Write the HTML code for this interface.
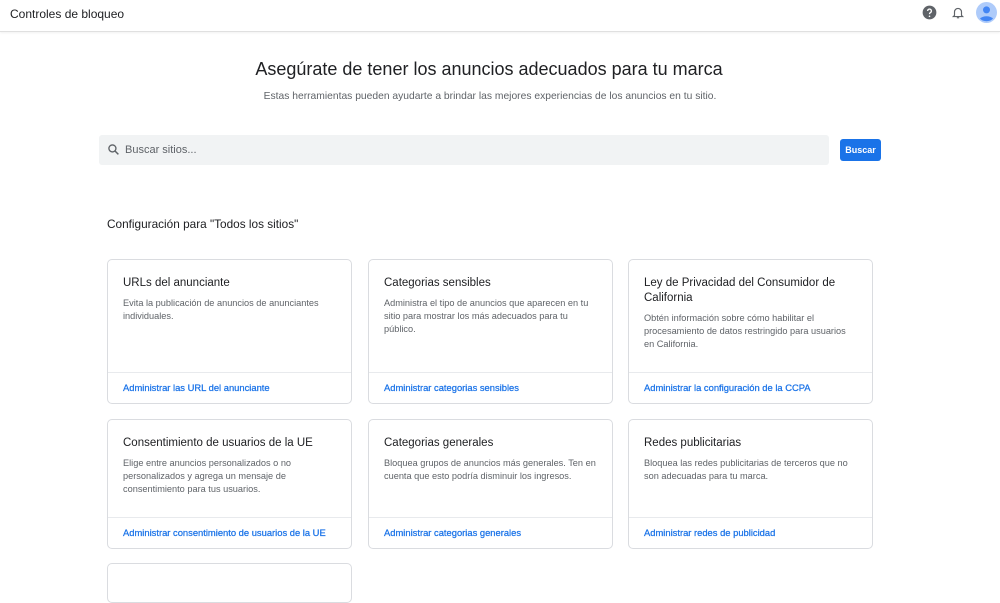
<!DOCTYPE html>
<html><head><meta charset="utf-8"><style>
*{box-sizing:border-box;margin:0;padding:0}
body{width:1000px;height:566px;overflow:hidden;background:#fff;font-family:"Liberation Sans",sans-serif;color:#202124;position:relative}
.hdr{position:absolute;left:0;top:0;width:1000px;height:32px;border-bottom:1px solid #e0e0e0;box-shadow:0 1px 2px rgba(0,0,0,.06)}
.hdr .t{position:absolute;left:10px;top:7px;font-size:12px;color:#202124}
h1{position:absolute;top:59px;left:-11px;width:1000px;text-align:center;font-weight:400;font-size:18px;color:#202124}
.sub{position:absolute;top:91px;width:980px;text-align:center;font-size:10.3px;color:#5f6368}
.search{position:absolute;left:99px;top:135px;width:730px;height:30px;background:#f1f3f4;border-radius:3px}
.search span{position:absolute;left:26px;top:9px;font-size:11px;color:#5f6368}
.btn{position:absolute;left:840px;top:139px;width:41px;height:22px;background:#1a73e8;border-radius:3px;color:#fff;font-size:9px;font-weight:bold;text-align:center;line-height:22px}
.sec{position:absolute;left:107px;top:217px;font-size:11.8px;color:#202124}
.card{position:absolute;width:245px;border:1px solid #dadce0;border-radius:5px;background:#fff}
.card h3{position:absolute;left:15px;top:16px;font-weight:400;font-size:11.5px;line-height:15px;color:#202124;width:225px}
.card p{position:absolute;left:15px;font-size:9.2px;line-height:13px;color:#5f6368;width:213px}
.card .f{position:absolute;left:0;right:0;border-top:1px solid #e8eaed}
.card a{position:absolute;left:15px;font-size:9.4px;color:#1a73e8;text-decoration:none;-webkit-text-stroke:0.25px #1a73e8}
</style></head><body>
<div class="hdr"><div class="t">Controles de bloqueo</div>
<svg style="position:absolute;left:922px;top:5px" width="15" height="15" viewBox="0 0 24 24"><circle cx="12" cy="12" r="11" fill="#5f6368"/><path d="M9 9.5a3 3 0 1 1 4.5 2.6c-1 .6-1.5 1.1-1.5 2.4" stroke="#fff" stroke-width="2.2" fill="none"/><circle cx="12" cy="18" r="1.3" fill="#fff"/></svg>
<svg style="position:absolute;left:951px;top:5px" width="14" height="15" viewBox="0 0 24 24"><path d="M6 17V11a6 6 0 0 1 12 0v6l2 2H4z" fill="none" stroke="#5f6368" stroke-width="2"/><path d="M10 21h4" stroke="#5f6368" stroke-width="2"/></svg>
<svg style="position:absolute;left:976px;top:2px" width="21" height="21" viewBox="0 0 24 24"><circle cx="12" cy="12" r="12" fill="#aecbfa"/><circle cx="12" cy="9" r="4" fill="#4285f4"/><path d="M4.5 19a9 6 0 0 1 15 0A11 11 0 0 1 4.5 19z" fill="#4285f4"/></svg>
</div>
<h1>Asegúrate de tener los anuncios adecuados para tu marca</h1>
<div class="sub">Estas herramientas pueden ayudarte a brindar las mejores experiencias de los anuncios en tu sitio.</div>
<div class="search"><svg style="position:absolute;left:8px;top:8px" width="13" height="13" viewBox="0 0 24 24"><circle cx="10" cy="10" r="6.5" fill="none" stroke="#5f6368" stroke-width="2.5"/><path d="M15 15l6 6" stroke="#5f6368" stroke-width="2.8"/></svg><span>Buscar sitios...</span></div>
<div class="btn">Buscar</div>
<div class="sec">Configuración para "Todos los sitios"</div>

<div class="card" style="left:107px;top:259px;height:145px"><h3>URLs del anunciante</h3><p style="top:37px">Evita la publicación de anuncios de anunciantes individuales.</p><div class="f" style="top:112px"></div><a style="top:122px">Administrar las URL del anunciante</a></div>
<div class="card" style="left:368px;top:259px;height:145px"><h3>Categorias sensibles</h3><p style="top:37px">Administra el tipo de anuncios que aparecen en tu sitio para mostrar los más adecuados para tu público.</p><div class="f" style="top:112px"></div><a style="top:122px">Administrar categorias sensibles</a></div>
<div class="card" style="left:628px;top:259px;height:145px"><h3>Ley de Privacidad del Consumidor de California</h3><p style="top:52px">Obtén información sobre cómo habilitar el procesamiento de datos restringido para usuarios en California.</p><div class="f" style="top:112px"></div><a style="top:122px">Administrar la configuración de la CCPA</a></div>

<div class="card" style="left:107px;top:419px;height:130px"><h3>Consentimiento de usuarios de la UE</h3><p style="top:37px">Elige entre anuncios personalizados o no personalizados y agrega un mensaje de consentimiento para tus usuarios.</p><div class="f" style="top:97px"></div><a style="top:107px">Administrar consentimiento de usuarios de la UE</a></div>
<div class="card" style="left:368px;top:419px;height:130px"><h3>Categorias generales</h3><p style="top:37px">Bloquea grupos de anuncios más generales. Ten en cuenta que esto podría disminuir los ingresos.</p><div class="f" style="top:97px"></div><a style="top:107px">Administrar categorias generales</a></div>
<div class="card" style="left:628px;top:419px;height:130px"><h3>Redes publicitarias</h3><p style="top:37px">Bloquea las redes publicitarias de terceros que no son adecuadas para tu marca.</p><div class="f" style="top:97px"></div><a style="top:107px">Administrar redes de publicidad</a></div>

<div class="card" style="left:107px;top:563px;height:40px"></div>
</body></html>
